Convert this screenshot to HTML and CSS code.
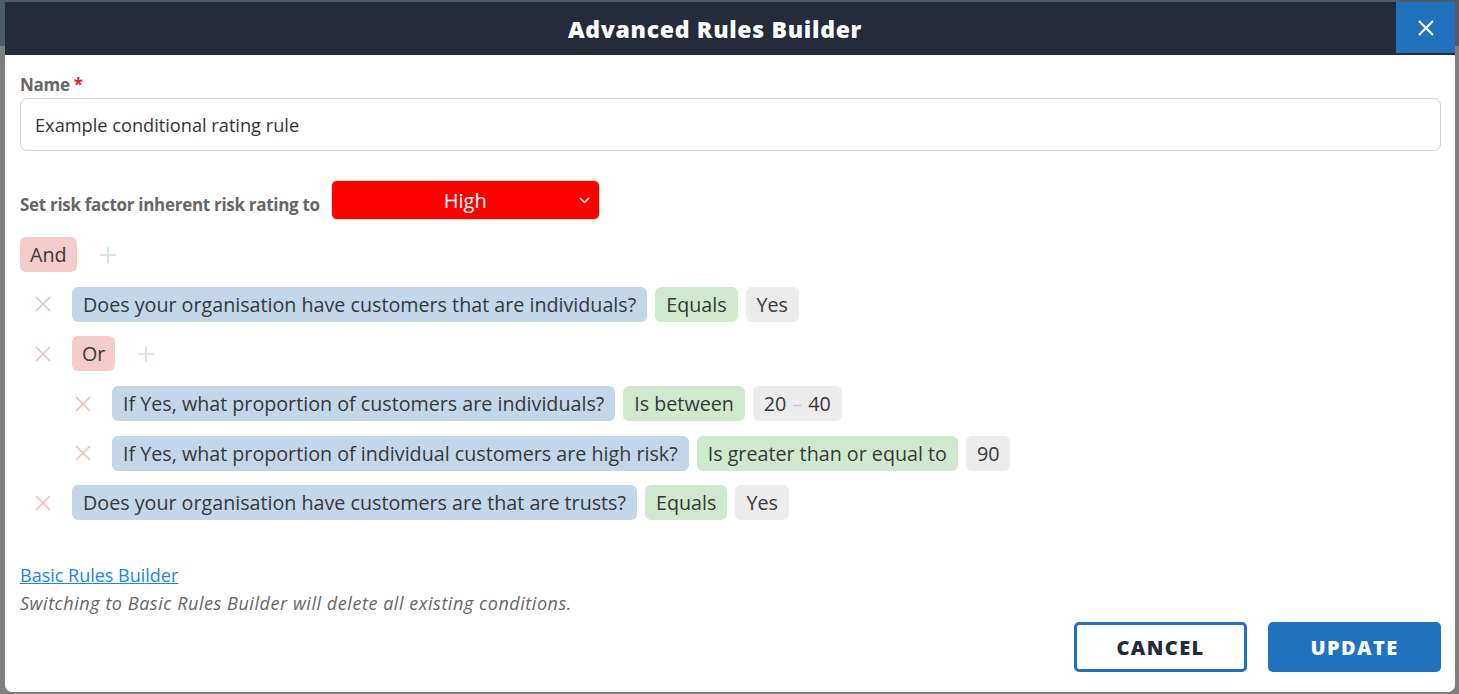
FILE: index.html
```html
<!DOCTYPE html>
<html lang="en">
<head>
    <meta charset="UTF-8">
    <meta name="viewport" content="width=device-width, initial-scale=1.0">
    <title>Advanced Rules Builder</title>
    <link rel="stylesheet" href="styles.css">
</head>
<body>
    <div class="backdrop">
        <div class="page-bar"></div>
    </div>

    <div class="modal">
        <div class="modal-header">
            <h2>Advanced Rules Builder</h2>
            <button class="close-btn" type="button" aria-label="Close">
                <svg width="18" height="18" viewBox="0 0 18 18"><path d="M2 2 L16 16 M16 2 L2 16" stroke="#fff" stroke-width="2.2" fill="none"/></svg>
            </button>
        </div>

        <div class="modal-body">
            <label class="field-label" for="ruleName">Name <span class="req">*</span></label>
            <input class="text-input" type="text" id="ruleName" value="Example conditional rating rule">

            <div class="rating-row">
                <span class="rating-label">Set risk factor inherent risk rating to</span>
                <div class="rating-select">
                    <span>High</span>
                    <svg class="chevron" width="11" height="7" viewBox="0 0 11 7"><path d="M1 1 L5.5 5.5 L10 1" stroke="#fff" stroke-width="1.5" fill="none"/></svg>
                </div>
            </div>

            <div class="group">
                <div class="row">
                    <span class="chip chip-op">And</span>
                    <span class="add-btn"><svg width="18" height="18" viewBox="0 0 18 18"><path d="M9 1 V17 M1 9 H17" stroke="#c9e6c9" stroke-width="1.6"/></svg></span>
                </div>

                <div class="children">
                    <div class="row">
                        <span class="remove-btn"><svg width="16" height="16" viewBox="0 0 16 16"><path d="M1 1 L15 15 M15 1 L1 15" stroke="#f2bcbc" stroke-width="1.6"/></svg></span>
                        <span class="chip chip-q">Does your organisation have customers that are individuals?</span>
                        <span class="chip chip-cmp">Equals</span>
                        <span class="chip chip-val">Yes</span>
                    </div>

                    <div class="row">
                        <span class="remove-btn"><svg width="16" height="16" viewBox="0 0 16 16"><path d="M1 1 L15 15 M15 1 L1 15" stroke="#f2bcbc" stroke-width="1.6"/></svg></span>
                        <span class="chip chip-op">Or</span>
                        <span class="add-btn"><svg width="18" height="18" viewBox="0 0 18 18"><path d="M9 1 V17 M1 9 H17" stroke="#c9e6c9" stroke-width="1.6"/></svg></span>
                    </div>

                    <div class="children nested">
                        <div class="row">
                            <span class="remove-btn"><svg width="16" height="16" viewBox="0 0 16 16"><path d="M1 1 L15 15 M15 1 L1 15" stroke="#f2bcbc" stroke-width="1.6"/></svg></span>
                            <span class="chip chip-q">If Yes, what proportion of customers are individuals?</span>
                            <span class="chip chip-cmp">Is between</span>
                            <span class="chip chip-val">20 <span class="dash">–</span> 40</span>
                        </div>
                        <div class="row">
                            <span class="remove-btn"><svg width="16" height="16" viewBox="0 0 16 16"><path d="M1 1 L15 15 M15 1 L1 15" stroke="#f2bcbc" stroke-width="1.6"/></svg></span>
                            <span class="chip chip-q">If Yes, what proportion of individual customers are high risk?</span>
                            <span class="chip chip-cmp">Is greater than or equal to</span>
                            <span class="chip chip-val">90</span>
                        </div>
                    </div>

                    <div class="row">
                        <span class="remove-btn"><svg width="16" height="16" viewBox="0 0 16 16"><path d="M1 1 L15 15 M15 1 L1 15" stroke="#f2bcbc" stroke-width="1.6"/></svg></span>
                        <span class="chip chip-q">Does your organisation have customers are that are trusts?</span>
                        <span class="chip chip-cmp">Equals</span>
                        <span class="chip chip-val">Yes</span>
                    </div>
                </div>
            </div>

            <div class="modal-footer">
                <div class="switch-info">
                    <a href="#" class="switch-link">Basic Rules Builder</a>
                    <p class="switch-note">Switching to Basic Rules Builder will delete all existing conditions.</p>
                </div>
                <div class="actions">
                    <button class="btn btn-outline" type="button">CANCEL</button>
                    <button class="btn btn-primary" type="button">UPDATE</button>
                </div>
            </div>
        </div>
    </div>
</body>
</html>
```

FILE: styles.css
```css
* {
    box-sizing: border-box;
}
body {
    margin: 0;
    height: 100vh;
    overflow: hidden;
    font-family: "Open Sans", sans-serif;
    background-color: #7f7f7f;
}
.backdrop {
    position: fixed;
    inset: 0;
    background-color: #7f7f7f;
}
.page-bar {
    height: 46px;
    background-color: #1e3a56;
    opacity: 0.5;
}
.modal {
    position: absolute;
    top: 2px;
    left: 5px;
    width: 1450px;
    height: 690px;
    background-color: #fff;
    border-radius: 0 0 7px 7px;
    display: flex;
    flex-direction: column;
}
.modal-header {
    height: 53px;
    background-color: #252b3b;
    display: flex;
    align-items: center;
    justify-content: center;
    position: relative;
}
.modal-header h2 {
    margin: 0 0 0 -30px;
    color: #fff;
    font-family: "Open Sans", sans-serif;
    font-weight: 800;
    font-size: 23px;
    letter-spacing: 0.7px;
}
.close-btn {
    position: absolute;
    top: 0;
    right: 0;
    width: 59px;
    height: 51px;
    border: none;
    background-color: #1f72bb;
    display: flex;
    align-items: center;
    justify-content: center;
    padding: 0;
}
.modal-body {
    flex: 1;
    padding: 20px 14px 20px 15px;
    display: flex;
    flex-direction: column;
}
.field-label {
    font-weight: 700;
    font-size: 17px;
    color: #666;
    line-height: 20px;
    letter-spacing: -0.3px;
}
.req {
    color: #e02020;
}
.text-input {
    margin-top: 3px;
    height: 53px;
    width: 100%;
    border: 1px solid #cfd5db;
    border-radius: 7px;
    padding: 0 14px;
    font-family: "Open Sans", sans-serif;
    font-size: 18.2px;
    color: #333;
}
.rating-row {
    display: flex;
    align-items: center;
    margin-top: 29px;
}
.rating-label {
    font-weight: 700;
    font-size: 17px;
    color: #666;
    letter-spacing: -0.3px;
    margin-right: 11px;
    margin-top: 8px;
}
.rating-select {
    width: 269px;
    height: 40px;
    background-color: #ff0000;
    border: 1px solid #d9d9d9;
    border-radius: 6px;
    color: #fff;
    font-size: 20px;
    display: flex;
    align-items: center;
    justify-content: center;
    position: relative;
}
.chevron {
    position: absolute;
    right: 9px;
    top: 16px;
}
.group {
    margin-top: 17px;
}
.row {
    display: flex;
    align-items: center;
    height: 35px;
    margin-bottom: 14.7px;
}
.children {
    padding-left: 9px;
}
.children.nested {
    padding-left: 40px;
}
.chip {
    height: 35px;
    display: inline-flex;
    align-items: center;
    padding: 0 11px;
    border-radius: 6px;
    font-size: 19.7px;
    color: #383838;
    margin-right: 8px;
    white-space: nowrap;
}
.chip-op {
    background-color: #f4cccc;
    padding: 0 10px;
}
.chip-q {
    background-color: #c2d7ea;
}
.chip-cmp {
    background-color: #cfe9cf;
}
.chip-val {
    background-color: #ececec;
}
.dash {
    color: #c8c8c8;
    margin: 0 6px;
}
.add-btn {
    display: inline-flex;
    margin-left: 14px;
}
.remove-btn {
    width: 28px;
    display: inline-flex;
    justify-content: center;
    margin-right: 15px;
}
.modal-footer {
    margin-top: auto;
    display: flex;
    justify-content: space-between;
    align-items: flex-end;
}
.switch-info {
    padding-bottom: 57px;
}
.switch-link {
    color: #1a86e6;
    font-size: 18px;
}
.switch-note {
    margin: 4px 0 0;
    font-style: italic;
    color: #666;
    font-size: 18px;
    letter-spacing: 0.55px;
}
.actions {
    display: flex;
    gap: 21px;
}
.btn {
    width: 173px;
    height: 50px;
    border-radius: 5px;
    font-family: "Open Sans", sans-serif;
    font-weight: 800;
    font-size: 20px;
    letter-spacing: 1.4px;
    cursor: pointer;
}
.btn-outline {
    background-color: #fff;
    border: 3px solid #1f72bb;
    color: #252b3b;
}
.btn-primary {
    background-color: #1f72bb;
    border: none;
    color: #fff;
}
```
